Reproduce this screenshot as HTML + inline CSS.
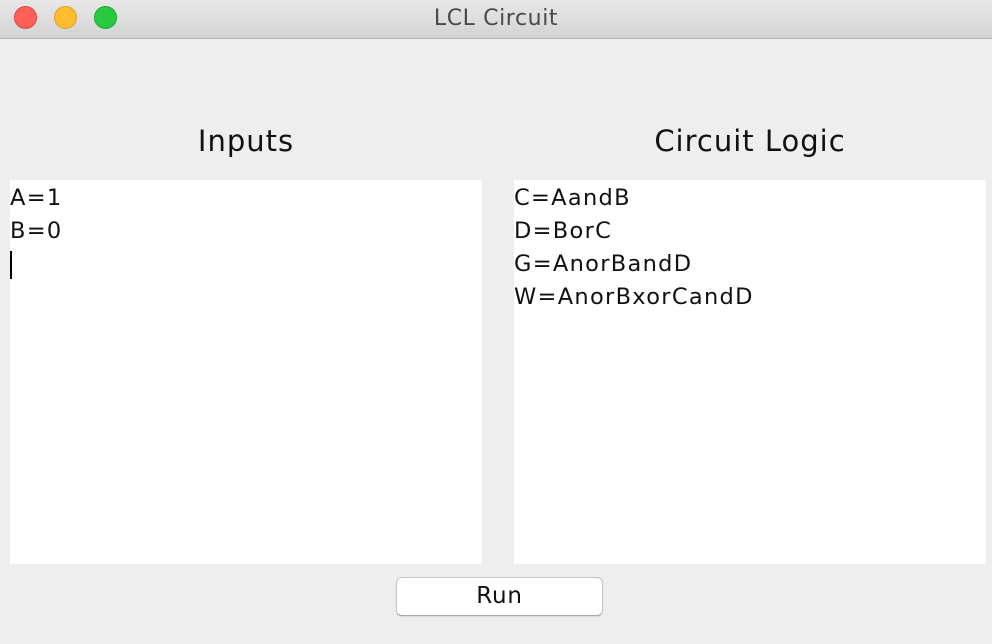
<!DOCTYPE html>
<html><head><style>
body{margin:0;width:992px;height:644px;background:#eeeeee;font-family:"DejaVu Sans","Liberation Sans",sans-serif;position:relative;overflow:hidden}
.title{position:absolute;left:0;top:0;width:992px;height:38px;background:linear-gradient(#e8e8e8,#d3d3d3);border-bottom:1px solid #b5b5b5;text-align:center;line-height:38px;font-size:22px;letter-spacing:0.6px;color:#4a4a4a}
.dot{position:absolute;top:6px;width:23px;height:23px;border-radius:50%;box-sizing:border-box}
.lbl{position:absolute;top:124px;font-size:29px;letter-spacing:1px;color:#111;text-align:center;width:472px}
.ta{position:absolute;top:180px;width:472px;height:384px;background:#fff;font-size:22.5px;letter-spacing:1.3px;line-height:33px;color:#111;box-sizing:border-box;padding:2px 0 0 0}
.btn{position:absolute;left:396px;top:577px;width:207px;height:39px;background:#fff;border:1px solid #c4c4c4;border-bottom-color:#aaa;border-radius:6px;box-sizing:border-box;text-align:center;line-height:37px;font-size:23px;letter-spacing:0.8px;color:#111;box-shadow:0 1px 1px rgba(0,0,0,.1)}
</style></head><body>
<div class="title">LCL Circuit</div>
<div class="dot" style="left:14px;background:#fe5f57;border:1px solid #e0443e"></div>
<div class="dot" style="left:54px;background:#febc2e;border:1px solid #dea123"></div>
<div class="dot" style="left:94px;background:#28c840;border:1px solid #1aab29"></div>
<div class="lbl" style="left:10px">Inputs</div>
<div class="lbl" style="left:514px">Circuit Logic</div>
<div class="ta" style="left:10px">A=1<br>B=0<br><span style="display:inline-block;width:1.5px;height:28px;background:#000;vertical-align:middle"></span></div>
<div class="ta" style="left:514px">C=AandB<br>D=BorC<br>G=AnorBandD<br>W=AnorBxorCandD</div>
<div class="btn">Run</div>
</body></html>
